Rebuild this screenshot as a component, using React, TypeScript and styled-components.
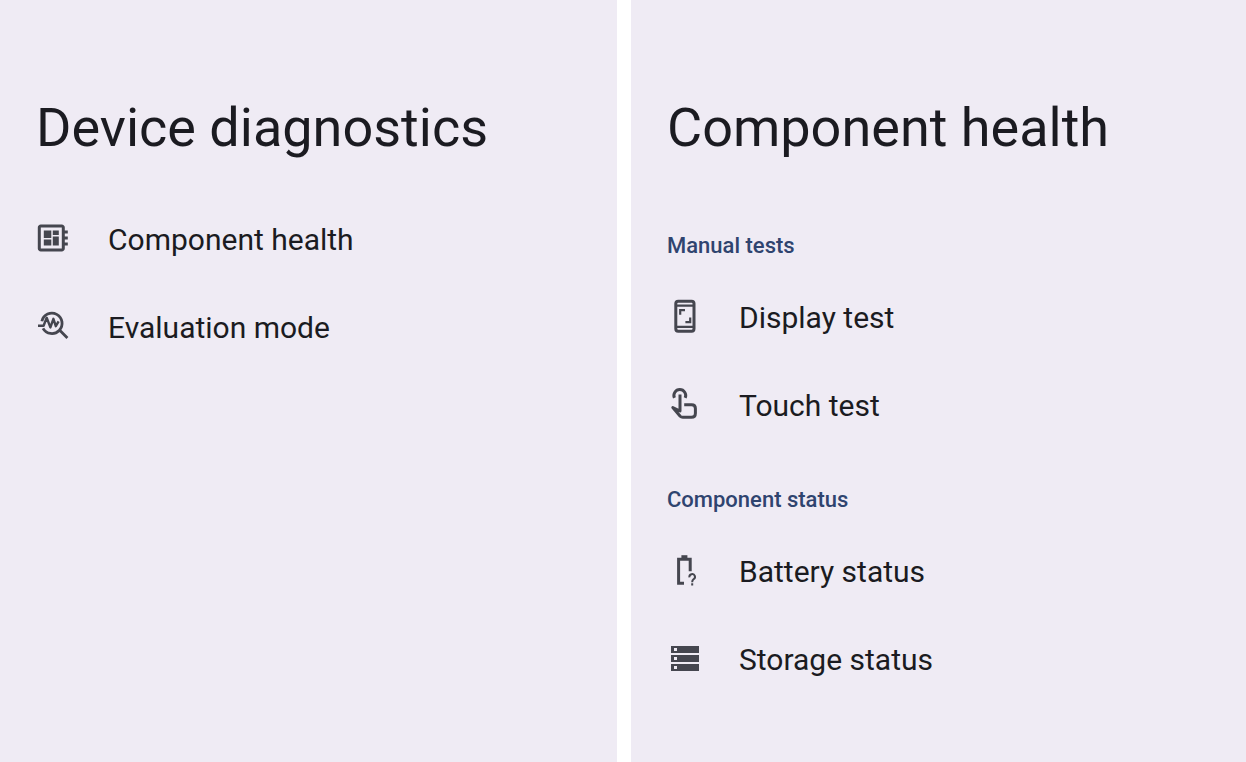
import React from "react";
import styled, { createGlobalStyle } from "styled-components";

const GlobalStyle = createGlobalStyle`
  * { box-sizing: border-box; }
  body {
    margin: 0;
    background: #ffffff;
    font-family: Roboto, "Liberation Sans", sans-serif;
  }
`;

const Screens = styled.div`
  display: grid;
  grid-template-columns: 617fr 615fr;
  gap: 14px;
  min-height: 100vh;
`;

const Screen = styled.main`
  background: #efebf4;
  padding: 96px 36px 48px;
`;

const Title = styled.h1`
  margin: 0 0 34px;
  color: #1b1b21;
  font-size: 54px;
  font-weight: 400;
  line-height: 64px;
`;

const SectionLabel = styled.h2`
  margin: 0;
  padding: 38px 0 12px;
  color: #2f446f;
  font-size: 22px;
  font-weight: 500;
  line-height: 28px;
`;

const List = styled.ul`
  list-style: none;
  margin: 0;
  padding: 0;
`;

const Row = styled.button`
  display: flex;
  align-items: center;
  gap: 36px;
  width: 100%;
  height: 88px;
  padding: 0;
  border: 0;
  background: transparent;
  color: #1b1b21;
  font-family: inherit;
  font-size: 30px;
  line-height: 40px;
  text-align: left;
  cursor: pointer;
`;

const RowLabel = styled.span`
  padding-top: 4px;
`;

const Icon = styled.svg`
  flex: none;
  width: 36px;
  height: 36px;
  fill: none;
  stroke: #45464f;
  stroke-width: 3;
`;

const BoardIcon = () => (
  <Icon viewBox="0.8 0 24 24" aria-hidden="true">
    <path
      fill="#45464f"
      stroke="none"
      d="M22 9V7h-2V5c0-1.1-.9-2-2-2H4c-1.1 0-2 .9-2 2v14c0 1.1.9 2 2 2h14c1.1 0 2-.9 2-2v-2h2v-2h-2v-2h2v-2h-2V9h2zm-4 10H4V5h14v14zM6 13h5v4H6v-4zm6-6h4v3h-4V7zM6 7h5v5H6V7zm6 4h4v6h-4v-6z"
    />
  </Icon>
);

const EvaluationIcon = () => (
  <Icon viewBox="1 0 36 36" aria-hidden="true">
    <path strokeWidth="2.8" d="M6.9 13.2A10.2 10.2 0 1 1 8 20.4M24 21.4L32.4 29.9" />
    <path
      strokeWidth="2.4"
      strokeLinejoin="round"
      d="M3 17.8H8.6L11.7 9.8L15.4 19.4L18.4 10.8L20.8 18.2L23.6 13.4"
    />
  </Icon>
);

const DisplayIcon = () => (
  <Icon viewBox="2 0 36 36" aria-hidden="true">
    <rect x="10.8" y="3.2" width="18.2" height="30" rx="2.4" />
    <path strokeWidth="2.2" d="M10.8 7.6h18.2M10.8 28.8h18.2M15.2 16.8V12.2h4.8M25.2 19.4V24.2h-4.8" />
  </Icon>
);

const TouchIcon = () => (
  <Icon viewBox="2 0 36 36" aria-hidden="true">
    <path d="M9.4 11.8A5.9 5.9 0 1 1 20.2 11.8" />
    <path
      strokeLinejoin="round"
      d="M15 8.5V25L7.8 21.6L15.2 30.2Q16.2 31.2 17.8 31.2H26.4Q30.4 31.2 30.4 27.2V22.6Q30.4 18.8 26.6 18.8H19.2"
    />
  </Icon>
);

const BatteryIcon = () => (
  <Icon viewBox="2 0 36 36" aria-hidden="true">
    <path d="M19 31.3H13.6V7.3H25.2V19.2" />
    <path d="M16.4 5.2h6" strokeWidth="4" />
    <path strokeWidth="2" d="M24.4 25.3A2.8 2.8 0 1 1 28.4 27.4Q27.2 28.2 27.2 30.2M27.2 31.3v2.2" />
  </Icon>
);

const StorageIcon = () => (
  <Icon viewBox="2 0 36 36" aria-hidden="true">
    <path
      fill="#45464f"
      stroke="none"
      fillRule="evenodd"
      d="M6 6h28v7H6zM9 8v3h3V8zM6 15h28v7H6zM9 17v3h3v-3zM6 24h28v7H6zM9 26v3h3v-3z"
    />
  </Icon>
);

type Item = { label: string; Glyph: React.FC };

const ItemList = ({ items }: { items: Item[] }) => (
  <List>
    {items.map(({ label, Glyph }) => (
      <li key={label}>
        <Row type="button">
          <Glyph />
          <RowLabel>{label}</RowLabel>
        </Row>
      </li>
    ))}
  </List>
);

const diagnostics: Item[] = [
  { label: "Component health", Glyph: BoardIcon },
  { label: "Evaluation mode", Glyph: EvaluationIcon },
];

const manualTests: Item[] = [
  { label: "Display test", Glyph: DisplayIcon },
  { label: "Touch test", Glyph: TouchIcon },
];

const componentStatus: Item[] = [
  { label: "Battery status", Glyph: BatteryIcon },
  { label: "Storage status", Glyph: StorageIcon },
];

export default function App() {
  return (
    <>
      <GlobalStyle />
      <Screens>
        <Screen>
          <Title>Device diagnostics</Title>
          <ItemList items={diagnostics} />
        </Screen>
        <Screen>
          <Title>Component health</Title>
          <SectionLabel>Manual tests</SectionLabel>
          <ItemList items={manualTests} />
          <SectionLabel>Component status</SectionLabel>
          <ItemList items={componentStatus} />
        </Screen>
      </Screens>
    </>
  );
}
